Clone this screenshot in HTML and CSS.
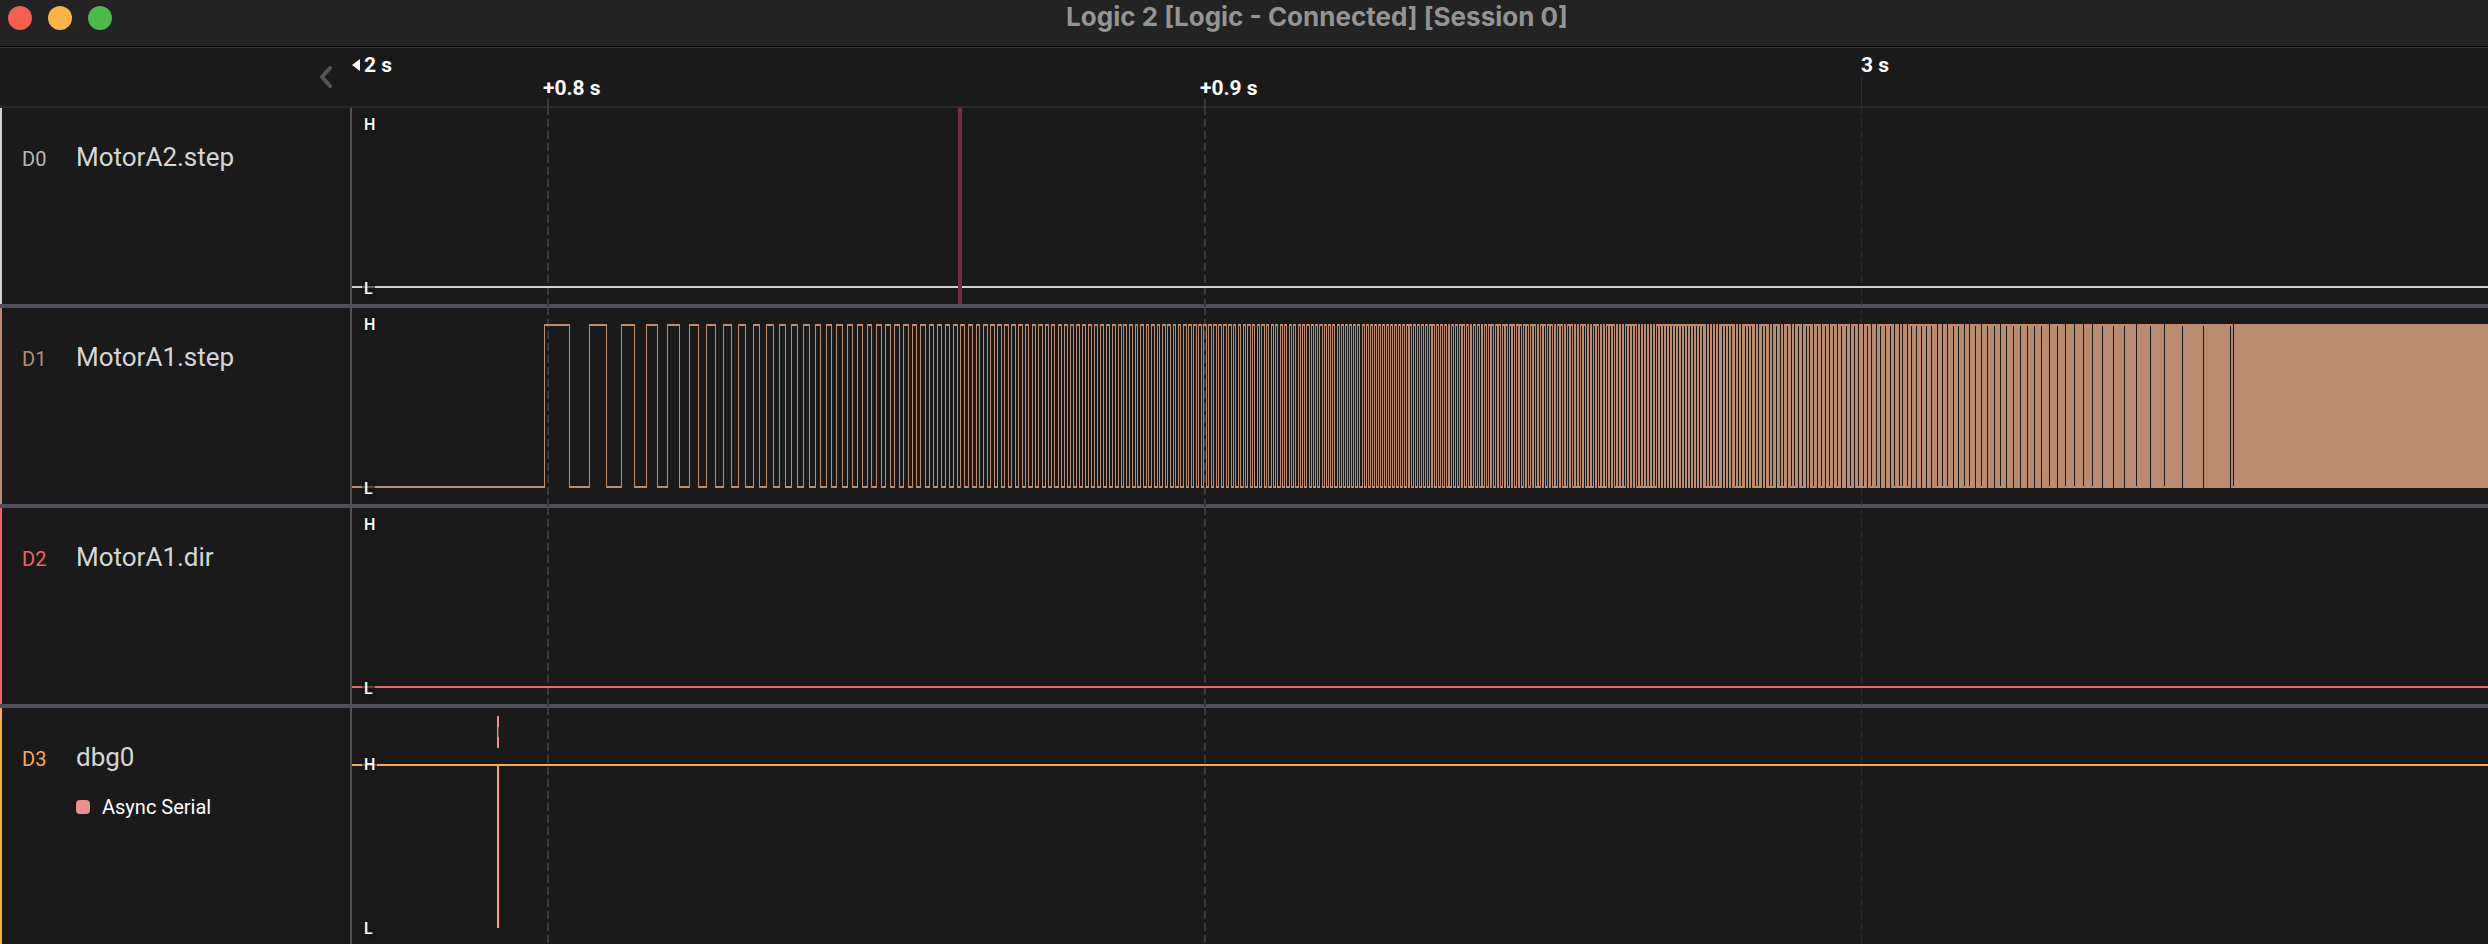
FILE: index.html
```html
<!DOCTYPE html>
<html lang="en">
<head>
<meta charset="utf-8">
<title>Logic 2 [Logic - Connected] [Session 0]</title>
<link rel="stylesheet" href="styles.css">
</head>
<body>
<header class="titlebar">
  <div class="lights">
    <button class="light light-close" type="button" aria-label="Close"></button>
    <button class="light light-min" type="button" aria-label="Minimize"></button>
    <button class="light light-max" type="button" aria-label="Zoom"></button>
  </div>
  <h1 class="title">Logic 2 [Logic - Connected] [Session 0]</h1>
</header>

<div class="ruler">
  <div class="ruler-side">
    <button class="collapse" type="button" aria-label="Collapse channels">
      <svg width="14" height="22" viewBox="0 0 14 22"><path d="M11 2 L3 11 L11 20" fill="none" stroke="#555" stroke-width="4" stroke-linecap="round" stroke-linejoin="round"/></svg>
    </button>
  </div>
  <div class="ruler-scale">
    <div class="origin">
      <svg width="8" height="12" viewBox="0 0 8 12"><path d="M8 0 V12 L0 6 Z" fill="#fff"/></svg>
      <span>2 s</span>
    </div>
    <span class="tick tick-minor at-08">+0.8 s</span>
    <span class="tick tick-minor at-09">+0.9 s</span>
    <span class="tick tick-major at-3">3 s</span>
    <i class="stem at-08-line"></i>
    <i class="stem at-09-line"></i>
    <i class="stem stem-long at-3-line"></i>
  </div>
</div>

<main class="channels">
  <section class="channel ch0">
    <div class="side"><span class="id">D0</span><span class="name">MotorA2.step</span></div>
    <div class="plot">
      <i class="grid at-08-line"></i><i class="grid at-09-line"></i><i class="grid grid-faint at-3-line"></i>
      <svg class="wave" shape-rendering="crispEdges"><rect y="178" width="100%" height="2" fill="#d2d2d2"/></svg>
      <i class="marker"></i>
      <span class="level high">H</span><span class="level low">L</span>
    </div>
  </section>
  <section class="channel ch1">
    <div class="side"><span class="id">D1</span><span class="name">MotorA1.step</span></div>
    <div class="plot">
      <i class="grid at-08-line"></i><i class="grid at-09-line"></i><i class="grid grid-faint at-3-line"></i>
      <svg class="wave" shape-rendering="crispEdges"><path id="step-wave" fill="#bc8c71"/></svg>
      <span class="level high">H</span><span class="level low">L</span>
    </div>
  </section>
  <section class="channel ch2">
    <div class="side"><span class="id">D2</span><span class="name">MotorA1.dir</span></div>
    <div class="plot">
      <i class="grid at-08-line"></i><i class="grid at-09-line"></i><i class="grid grid-faint at-3-line"></i>
      <svg class="wave" shape-rendering="crispEdges"><rect y="178" width="100%" height="2" fill="#ee6468"/></svg>
      <span class="level high">H</span><span class="level low">L</span>
    </div>
  </section>
  <section class="channel ch3">
    <div class="side">
      <span class="id">D3</span><span class="name">dbg0</span>
      <div class="analyzer"><i class="swatch"></i><span>Async Serial</span></div>
    </div>
    <div class="plot">
      <i class="grid at-08-line"></i><i class="grid at-09-line"></i><i class="grid grid-faint at-3-line"></i>
      <svg class="wave" shape-rendering="crispEdges">
        <rect y="56" width="100%" height="2" fill="#fbaa53"/>
        <rect x="145" y="56" width="2" height="164" fill="#fbaa53"/>
        <rect x="145" y="8" width="2" height="32" fill="#ed8f8f"/>
        <rect x="146" y="19" width="1" height="10" fill="#6b4545"/>
      </svg>
      <span class="level high">H</span><span class="level low">L</span>
    </div>
  </section>
</main>
<script src="wave.js"></script>
</body>
</html>
```
FILE: styles.css
```css
* { box-sizing: border-box; }
body {
  margin: 0;
  min-height: 100vh;
  display: flex;
  flex-direction: column;
  background: #1a1a1a;
  color: #fff;
  font-family: Roboto, "Liberation Sans", sans-serif;
  overflow: hidden;
}
button { border: 0; padding: 0; background: none; }

.titlebar {
  display: grid;
  grid-template-columns: 1fr auto 1fr;
  height: 48px;
  background: #232323;
  border-bottom: 1px solid #3c3c3c;
  box-shadow: inset 0 -1px #000;
}
.lights { display: flex; gap: 16px; padding: 6px 8px; }
.light { width: 24px; height: 24px; border-radius: 50%; }
.light-close { background: #f45f52; }
.light-min { background: #f9b445; }
.light-max { background: #4cba49; }
.title {
  grid-column: 2;
  margin: 0;
  padding-left: 146px;
  font-family: Inter, Roboto, sans-serif;
  font-size: 26px;
  line-height: 34px;
  font-weight: 700;
  color: #949494;
}

.ruler { display: flex; height: 60px; border-bottom: 2px solid #29292d; }
.ruler-side { width: 352px; display: flex; justify-content: flex-end; padding: 18px 19px 0 0; }
.collapse { width: 14px; height: 22px; }
.collapse svg { display: block; }
.ruler-scale { position: relative; flex: 1; font-size: 21px; line-height: 24px; font-weight: 700; }
.origin { display: flex; align-items: center; gap: 4px; height: 24px; margin-top: 5px; }
.tick { position: absolute; }
.tick-major { top: 5px; }
.tick-minor { top: 28px; }
.at-08 { left: 191px; }
.at-09 { left: 848px; }
.at-3 { left: 1509px; }
.stem { position: absolute; top: 51px; bottom: -2px; width: 2px; background: #39393c; }
.stem-long { top: 29px; width: 1px; background: #2c2c2f; }
.at-08-line { left: 195px; }
.at-09-line { left: 852px; }
.at-3-line { left: 1509px; }

.channels { flex: 1; display: flex; flex-direction: column; }
.channel { display: flex; height: 200px; border-bottom: 4px solid #50505a; }
.ch3 { flex: 1; height: auto; min-height: 236px; border-bottom: 0; }
.side {
  width: 352px;
  display: grid;
  grid-template-columns: 54px 1fr;
  align-content: start;
  align-items: baseline;
  padding: 33px 0 0 20px;
  border-left: 2px solid;
  border-right: 2px solid #50505a;
}
.id { font-size: 20px; line-height: 32px; }
.name { font-size: 26px; line-height: 32px; color: #d6d6d6; }
.ch0 .side { border-left-color: #d2d2d2; }
.ch0 .id { color: #b9b9b9; }
.ch1 .side { border-left-color: #bc8c71; }
.ch1 .id { color: #bc8c71; }
.ch2 .side { border-left-color: #ee6468; }
.ch2 .id { color: #ee6468; }
.ch3 .side { border-left-color: #fbaa53; }
.ch3 .id { color: #fbaa53; }
.analyzer {
  grid-column: 2;
  display: flex;
  align-items: center;
  gap: 12px;
  margin-top: 20px;
  font-size: 20px;
  line-height: 24px;
}
.swatch { width: 14px; height: 14px; border-radius: 4px; background: #ed8f8f; }

.plot { position: relative; flex: 1; min-width: 0; }
.wave { position: absolute; left: 0; top: 0; width: 100%; height: 100%; }
.grid {
  position: absolute;
  top: 0;
  bottom: -4px;
  width: 2px;
  background: repeating-linear-gradient(#39393c 0 7px, transparent 7px 11px, #39393c 11px 12px);
}
.grid-faint { width: 1px; opacity: 0.6; }
.marker { position: absolute; left: 606px; top: 0; bottom: 0; width: 4px; background: #6e3044; }
.level {
  position: absolute;
  left: 10px;
  padding: 0 2px;
  font-size: 16px;
  line-height: 20px;
  font-weight: 500;
  border-radius: 3px;
  background: rgba(24, 24, 24, 0.6);
}
.high { top: 7px; }
.low { top: 171px; }
.ch3 .high { top: 47px; }
.ch3 .low { top: 211px; }
```
FILE: wave.js
```js
// Step pulses of an accelerating motor, one column per pixel.
const TOP = 16, BOTTOM = 180, LINE = 2;
const START = 192, DENSE = 1548, END = 6000;

// Number of edges seen t pixels after the first one.
function edgeCount(t) {
  return t < 124
    ? 0.04 + 0.031 * t + 0.000271 * t * t
    : 0.42 + 0.0254 * t + 0.0002825 * t * t;
}

// Columns without an edge once pulses are near one per pixel: [x, level].
const gaps = [
  [2, 0], [7, 0], [11, 1], [16, 1], [21, 1], [26, 1], [31, 1], [37, 0], [42, 0], [47, 0],
  [53, 1], [58, 1], [64, 0], [69, 0], [75, 1], [81, 0], [87, 1], [94, 1], [100, 0], [106, 1],
  [113, 1], [120, 1], [127, 1], [134, 1], [141, 1], [149, 0], [157, 1], [165, 0], [174, 0],
  [183, 0], [192, 0], [202, 1], [213, 1], [224, 1], [236, 0], [250, 1], [264, 0], [282, 1],
  [303, 1], [330, 1], [333, 0]
];

const parts = [];
function box(x, y, w, h) {
  parts.push(`M${x} ${y}h${w}v${h}h${-w}z`);
}
function rail(x, w, high) {
  box(x, high ? TOP : BOTTOM - LINE, w, LINE);
}

rail(0, START, false);
let count = -1;
for (let x = START; x < DENSE; x++) {
  const next = Math.floor(edgeCount(x + 0.5 - START));
  if (next > count) {
    box(x, TOP, 1, BOTTOM - TOP);
    count = next;
  } else {
    rail(x, 1, count % 2 === 0);
  }
}
let from = DENSE;
for (const [offset, high] of gaps) {
  const x = DENSE + offset;
  box(from, TOP, x - from, BOTTOM - TOP);
  rail(x, 1, high === 1);
  from = x + 1;
}
box(from, TOP, END - from, BOTTOM - TOP);
document.getElementById("step-wave").setAttribute("d", parts.join(""));
```
